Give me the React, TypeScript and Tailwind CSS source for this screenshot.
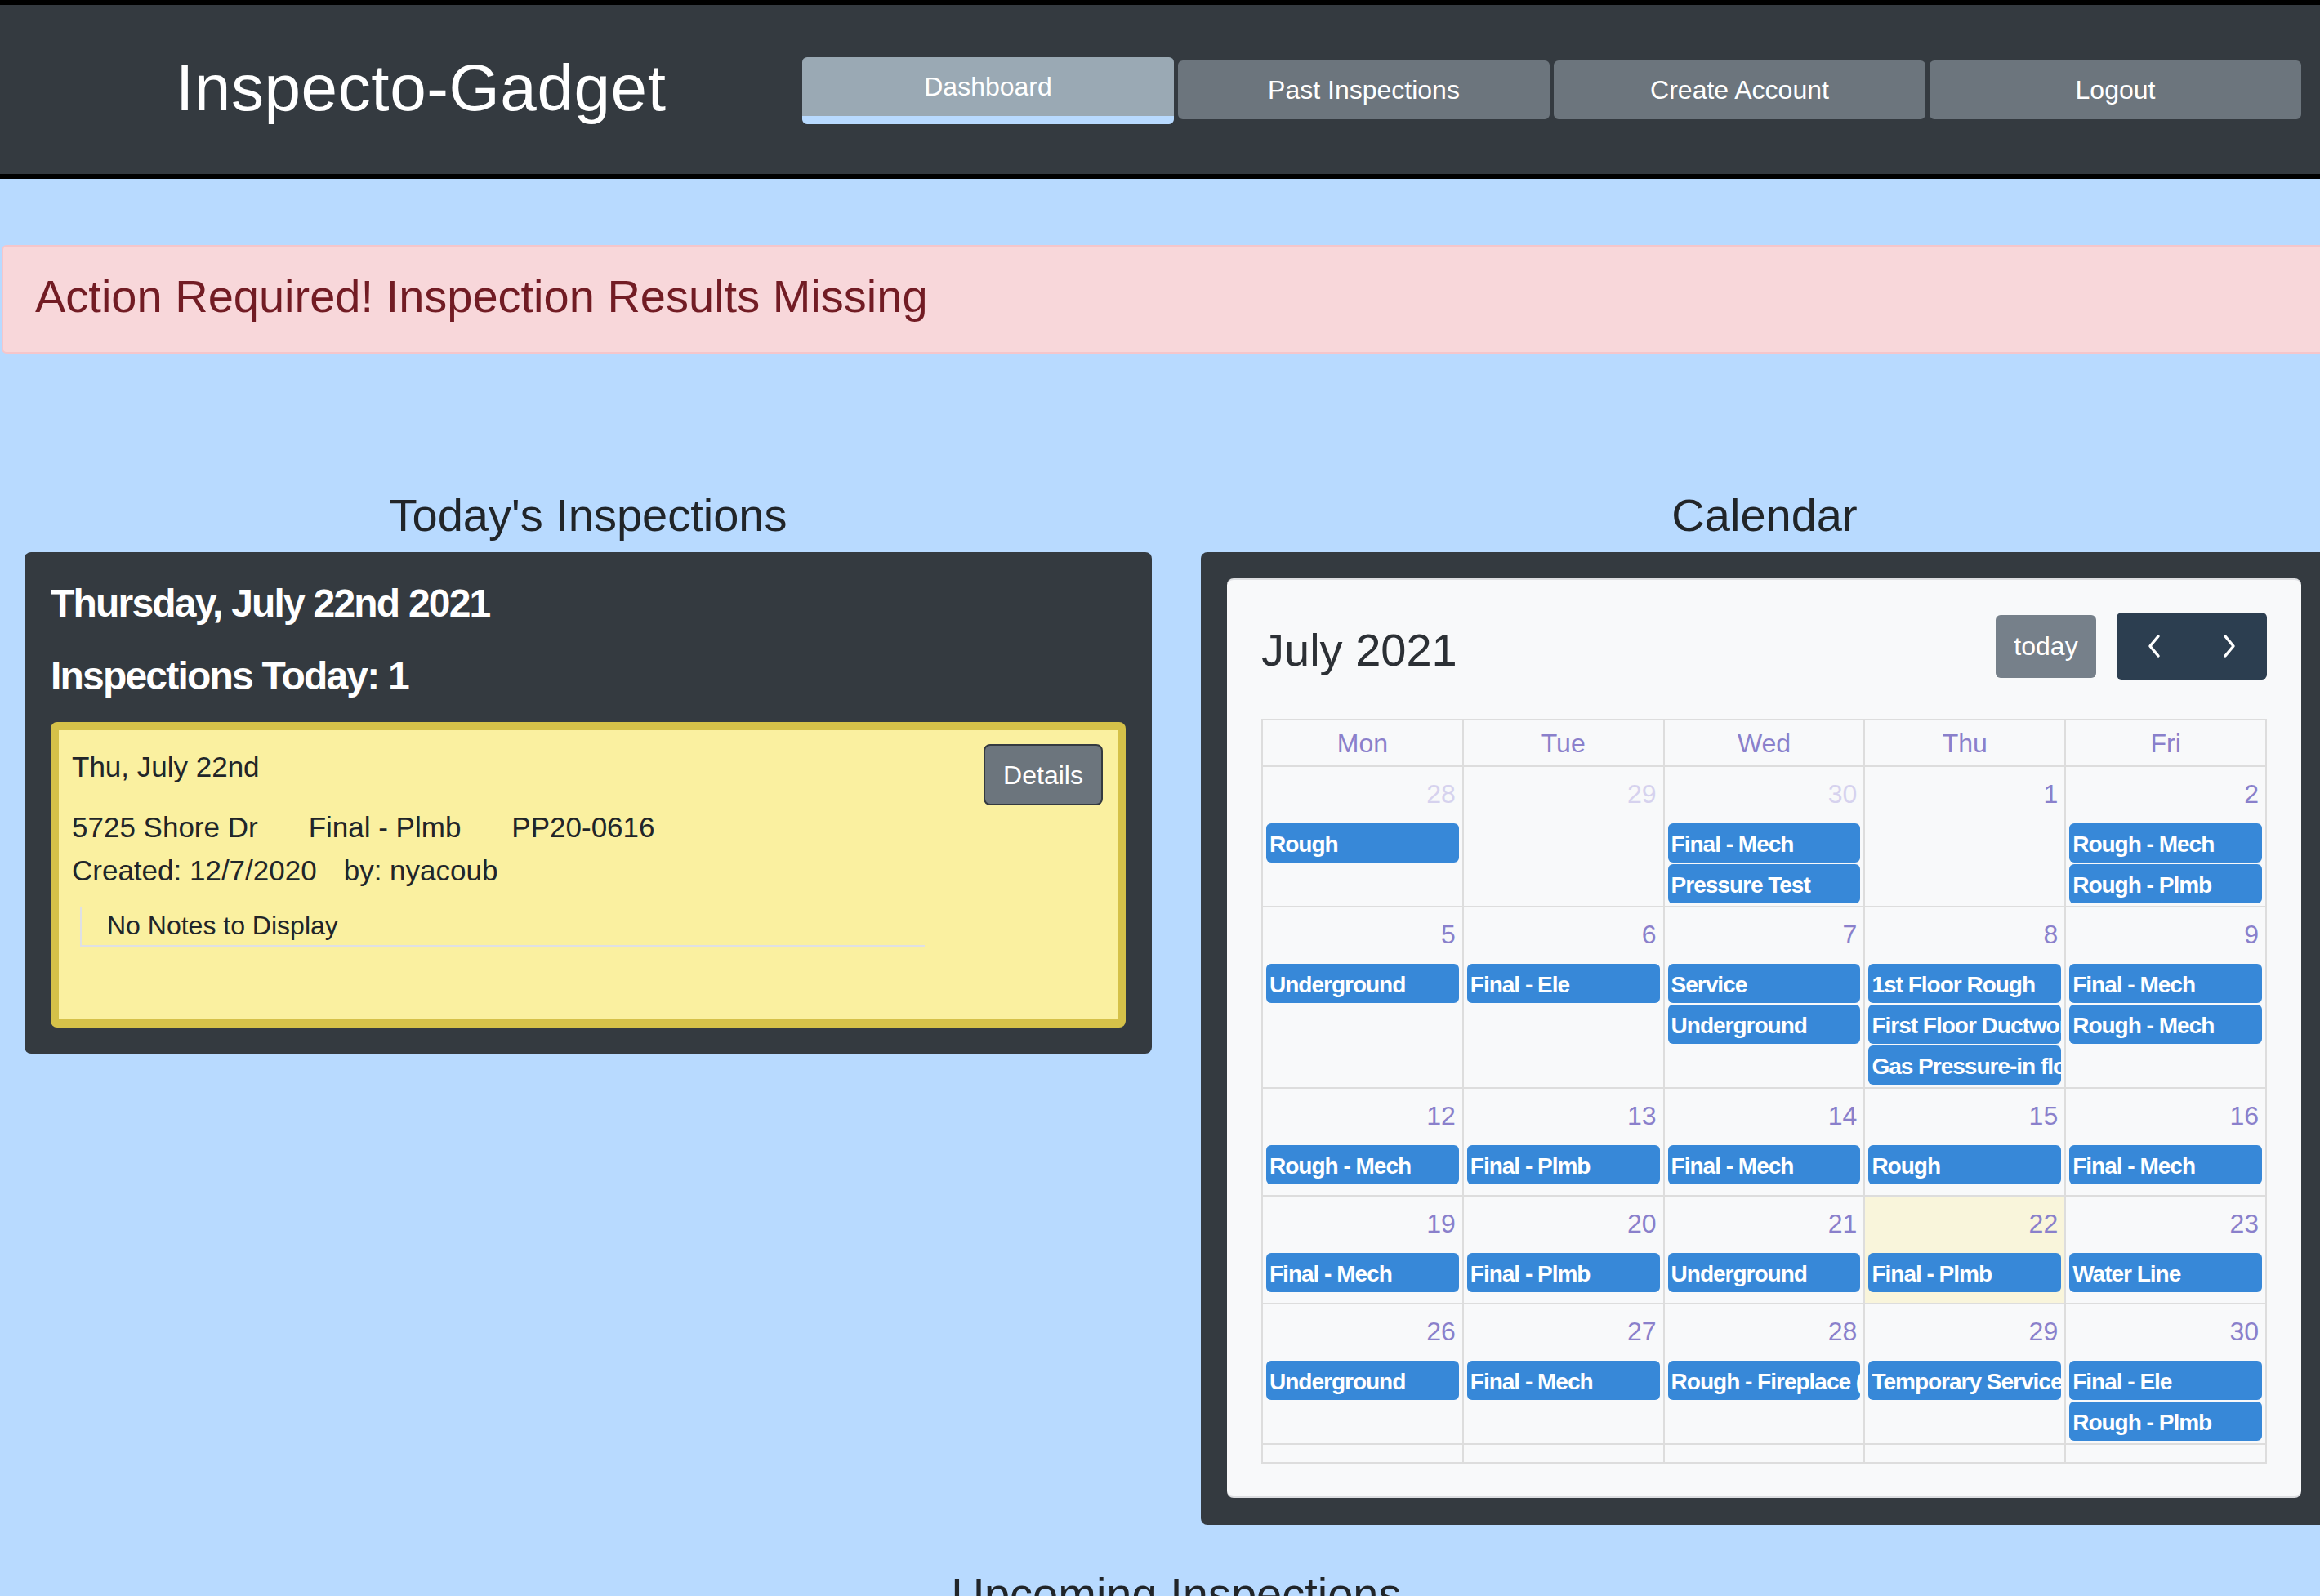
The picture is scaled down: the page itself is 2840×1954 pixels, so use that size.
import React from "react";

type Day = { d: number; o?: boolean; t?: boolean; e: string[] };

const weeks: Day[][] = [
  [
    { d: 28, o: true, e: ["Rough"] },
    { d: 29, o: true, e: [] },
    { d: 30, o: true, e: ["Final - Mech", "Pressure Test"] },
    { d: 1, e: [] },
    { d: 2, e: ["Rough - Mech", "Rough - Plmb"] },
  ],
  [
    { d: 5, e: ["Underground"] },
    { d: 6, e: ["Final - Ele"] },
    { d: 7, e: ["Service", "Underground"] },
    { d: 8, e: ["1st Floor Rough", "First Floor Ductwork", "Gas Pressure-in floor"] },
    { d: 9, e: ["Final - Mech", "Rough - Mech"] },
  ],
  [
    { d: 12, e: ["Rough - Mech"] },
    { d: 13, e: ["Final - Plmb"] },
    { d: 14, e: ["Final - Mech"] },
    { d: 15, e: ["Rough"] },
    { d: 16, e: ["Final - Mech"] },
  ],
  [
    { d: 19, e: ["Final - Mech"] },
    { d: 20, e: ["Final - Plmb"] },
    { d: 21, e: ["Underground"] },
    { d: 22, t: true, e: ["Final - Plmb"] },
    { d: 23, e: ["Water Line"] },
  ],
  [
    { d: 26, e: ["Underground"] },
    { d: 27, e: ["Final - Mech"] },
    { d: 28, e: ["Rough - Fireplace (Gas)"] },
    { d: 29, e: ["Temporary Service"] },
    { d: 30, e: ["Final - Ele", "Rough - Plmb"] },
  ],
];

const days = ["Mon", "Tue", "Wed", "Thu", "Fri"];

function Chevron({ left }: { left?: boolean }) {
  return (
    <svg width="20" height="30" viewBox="0 0 20 30" fill="none">
      <path
        d={left ? "M15 3 L5 15 L15 27" : "M5 3 L15 15 L5 27"}
        stroke="white"
        strokeWidth="3.5"
        strokeLinecap="round"
        strokeLinejoin="round"
      />
    </svg>
  );
}

export default function App() {
  return (
    <div className="w-[2840px] h-[1954px] overflow-hidden bg-[#b8daff] font-['Liberation_Sans',Arial,sans-serif] text-[#212529]">
      <div className="w-[2880px]">
        {/* Header */}
        <div className="w-[2840px] h-[219px] bg-[#343a40] border-y-[6px] border-black flex items-start pl-[215px]">
          <div className="w-[767px] shrink-0 mt-[62px] text-white text-[80px] leading-none tracking-[0.6px]">Inspecto-Gadget</div>
          <div className="flex items-start gap-[5px] mt-[64px]">
            <div className="w-[455px] h-[82px] rounded-[6px] bg-[#9aa9b4] border-b-[10px] border-[#b8daff] flex items-center justify-center text-white text-[32px]">
              Dashboard
            </div>
            {["Past Inspections", "Create Account", "Logout"].map((t) => (
              <div
                key={t}
                className="mt-[4px] w-[455px] h-[72px] rounded-[6px] bg-[#6c757d] flex items-center justify-center text-white text-[32px]"
              >
                {t}
              </div>
            ))}
          </div>
        </div>

        {/* Alert */}
        <div className="mt-[81px] mx-[2px] h-[133px] rounded-[6px] border-2 border-[#f5c6cb] bg-[#f8d7da] pl-[39px] pt-[27px]">
          <div className="text-[56px] leading-[1.2] text-[#721c24]">Action Required! Inspection Results Missing</div>
        </div>

        {/* Columns */}
        <div className="grid grid-cols-2 mt-[164px]">
          {/* Left */}
          <div className="px-[30px]">
            <div className="text-center text-[56px] leading-[1.2] mb-[12px]">Today's Inspections</div>
            <div className="bg-[#343a40] rounded-[8px] px-[32px] pt-[34px] pb-[32px]">
              <div className="text-white text-[48px] leading-[58px] font-bold tracking-[-1.8px]">Thursday, July 22nd 2021</div>
              <div className="mt-[31px] text-white text-[48px] leading-[58px] font-bold tracking-[-1.8px]">Inspections Today: 1</div>
              <div className="mt-[27px] h-[374px] rounded-[8px] border-[10px] border-[#d5c149] bg-[#faf0a0] pt-[17px] pl-[16px] pr-[18px]">
                <div className="flex items-start justify-between h-[75px]">
                  <div className="text-[35px] leading-[53px] mt-[1px]">Thu, July 22nd</div>
                  <div className="w-[146px] h-[75px] rounded-[8px] border-2 border-[#343a40] bg-[#6c757d] text-white text-[32px] flex items-center justify-center">
                    Details
                  </div>
                </div>
                <div className="flex gap-[62px] text-[35px] leading-[53px]">
                  <span>5725 Shore Dr</span>
                  <span>Final - Plmb</span>
                  <span>PP20-0616</span>
                </div>
                <div className="flex gap-[33px] text-[35px] leading-[53px]">
                  <span>Created: 12/7/2020</span>
                  <span>by: nyacoub</span>
                </div>
                <div className="mt-[18px] ml-[10px] w-[1034px] h-[49px] border-l-2 border-b-2 border-t border-[#dfe0e4] pl-[31px] pt-[3px] text-[32px] leading-[1.2]">
                  No Notes to Display
                </div>
              </div>
            </div>
          </div>

          {/* Right */}
          <div className="px-[30px]">
            <div className="text-center text-[56px] leading-[1.2] mb-[12px]">Calendar</div>
            <div className="bg-[#343a40] rounded-[8px] pl-[32px] pr-[33px] pt-[32px] pb-[33px]">
              <div className="w-[1315px] rounded-[8px] bg-[#f8f9fa] border-t-2 border-b-[3px] border-[#dcdde0] px-[42px] pt-[40px] pb-[39px]">
                <div className="flex items-center justify-between h-[82px]">
                  <div className="text-[56px] leading-[1.2] text-[#2c3035] mt-[8px]">July 2021</div>
                  <div className="flex items-center gap-[25px]">
                    <div className="w-[123px] h-[77px] rounded-[6px] bg-[#76808a] text-white text-[32px] flex items-center justify-center">
                      today
                    </div>
                    <div className="flex h-[82px] rounded-[6px] bg-[#2c3e50]">
                      <div className="w-[92px] flex items-center justify-center">
                        <Chevron left />
                      </div>
                      <div className="w-[92px] flex items-center justify-center">
                        <Chevron />
                      </div>
                    </div>
                  </div>
                </div>

                <div className="mt-[48px] border-2 border-[#ddd]">
                  <div className="flex border-b-2 border-[#ddd]">
                    {days.map((d, i) => (
                      <div
                        key={d}
                        className={`flex-1 h-[55px] flex items-center justify-center text-[32px] text-[#8a80cb] ${i < 4 ? "border-r-2 border-[#ddd]" : ""}`}
                      >
                        {d}
                      </div>
                    ))}
                  </div>
                  {weeks.map((w, wi) => (
                    <div key={wi} className="flex border-b-2 border-[#ddd]">
                      {w.map((c, ci) => (
                        <div
                          key={ci}
                          className={`flex-1 min-w-0 min-h-[130px] pt-[9px] pb-[1px] ${ci < 4 ? "border-r-2 border-[#ddd]" : ""} ${c.t ? "bg-[#f9f5db]" : ""}`}
                        >
                          <div
                            className={`h-[48px] text-right pr-[8px] text-[32px] leading-[48px] ${c.o ? "text-[#d6d2ee]" : "text-[#8a80cb]"}`}
                          >
                            {c.d}
                          </div>
                          <div className="mt-[12px]">
                            {c.e.map((ev, ei) => (
                              <div
                                key={ei}
                                className="mx-[4px] mb-[2px] h-[48px] rounded-[6px] bg-[#3788d8] pl-[4px] text-white text-[28px] leading-[51px] font-bold tracking-[-1px] whitespace-nowrap overflow-hidden"
                              >
                                {ev}
                              </div>
                            ))}
                          </div>
                        </div>
                      ))}
                    </div>
                  ))}
                  <div className="flex h-[21px]">
                    {days.map((d, i) => (
                      <div key={d} className={`flex-1 ${i < 4 ? "border-r-2 border-[#ddd]" : ""}`} />
                    ))}
                  </div>
                </div>
              </div>
            </div>
          </div>
        </div>

        <div className="mt-[51px] w-[2880px] text-center text-[56px] leading-[1.2]">Upcoming Inspections</div>
      </div>
    </div>
  );
}
